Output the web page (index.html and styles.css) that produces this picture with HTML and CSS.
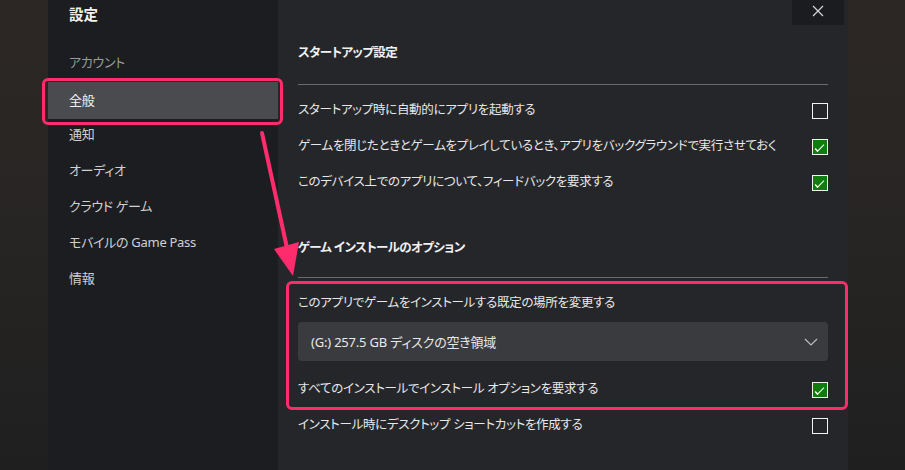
FILE: index.html
```html
<!DOCTYPE html>
<html lang="ja">
<head>
<meta charset="UTF-8">
<meta name="viewport" content="width=device-width, initial-scale=1.0">
<title>設定</title>
<link rel="stylesheet" href="styles.css">
</head>
<body>

<div class="window">
    <div class="sidebar">
        <div class="sidebar-title">設定</div>
        <ul class="menu">
            <li class="dim">アカウント</li>
            <li class="selected">全般</li>
            <li>通知</li>
            <li>オーディオ</li>
            <li>クラウド ゲーム</li>
            <li>モバイルの Game Pass</li>
            <li>情報</li>
        </ul>
    </div>

    <div class="main">
        <div class="close-row">
            <button class="close-btn" aria-label="閉じる">
                <svg width="12" height="12" viewBox="0 0 12 12"><path d="M1 1 L11 11 M11 1 L1 11" stroke="#d6d6d6" stroke-width="1.2" fill="none"/></svg>
            </button>
        </div>

        <h2 class="section-title first">スタートアップ設定</h2>
        <div class="row">
            <span>スタートアップ時に自動的にアプリを起動する</span>
            <span class="check"></span>
        </div>
        <div class="row">
            <span>ゲームを閉じたときとゲームをプレイしているとき、アプリをバックグラウンドで実行させておく</span>
            <span class="check on"></span>
        </div>
        <div class="row">
            <span>このデバイス上でのアプリについて、フィードバックを要求する</span>
            <span class="check on"></span>
        </div>

        <h2 class="section-title second">ゲーム インストールのオプション</h2>
        <div class="marked">
            <div class="label">このアプリでゲームをインストールする既定の場所を変更する</div>
            <div class="dropdown">
                <span>(G:) 257.5 GB ディスクの空き領域</span>
                <svg width="14" height="8" viewBox="0 0 14 8"><path d="M1 1 L7 7 L13 1" stroke="#bdbdbd" stroke-width="1.2" fill="none"/></svg>
            </div>
            <div class="row">
                <span>すべてのインストールでインストール オプションを要求する</span>
                <span class="check on"></span>
            </div>
        </div>
        <div class="row">
            <span>インストール時にデスクトップ ショートカットを作成する</span>
            <span class="check"></span>
        </div>
    </div>
</div>

<svg class="arrow" width="905" height="470" viewBox="0 0 905 470">
    <path d="M262 133 L287 248" stroke="#fe2c6c" stroke-width="4" stroke-linecap="round" fill="none"/>
    <polygon points="293,276 274,249 299,242" fill="#fe2c6c"/>
</svg>

</body>
</html>
```

FILE: styles.css
```css
body {
    margin: 0;
    padding: 0;
    width: 905px;
    height: 470px;
    overflow: hidden;
    position: relative;
    background: linear-gradient(180deg, #2c2725 0%, #272524 50%, #1f1f1f 100%);
    font-family: "Noto Sans", "Noto Sans CJK JP", sans-serif;
    font-feature-settings: "palt";
    color: #e8e8e8;
}
.window {
    display: flex;
    margin-left: 48px;
    width: 800px;
    height: 470px;
}
.sidebar {
    width: 230px;
    background-color: #1c1d20;
}
.sidebar-title {
    padding: 4px 0 0 21px;
    line-height: 20px;
    font-size: 14.5px;
    font-weight: bold;
    color: #f2f2f2;
}
.menu {
    list-style: none;
    margin: 20px 0 0;
    padding: 0;
}
.menu li {
    height: 36px;
    line-height: 36px;
    padding-left: 21px;
    font-size: 13px;
    letter-spacing: -0.3px;
    color: #d0d0d0;
    position: relative;
}
.menu li.dim {
    color: #9a9a9a;
}
.menu li.selected {
    height: 37px;
    margin-top: 2px;
    background-color: #4a4b4e;
    color: #f4f4f4;
}
.menu li.selected + li {
    margin-top: -3px;
}
.menu li.selected::after {
    content: "";
    position: absolute;
    left: -6px;
    right: -5px;
    top: -4px;
    bottom: -6px;
    border: 3px solid #fe2c6c;
    border-radius: 6px;
}
.main {
    width: 530px;
    padding: 0 20px;
    background-color: #25262a;
}
.close-row {
    height: 25px;
    display: flex;
    justify-content: flex-end;
    margin-right: -16px;
}
.close-btn {
    width: 52px;
    height: 25px;
    border: none;
    padding: 0 0 4px;
    background-color: #1b1c1f;
    display: flex;
    align-items: center;
    justify-content: center;
}
.section-title {
    margin: 0;
    padding-bottom: 21px;
    border-bottom: 1px solid #6b6b6b;
    line-height: 20px;
    font-size: 12.5px;
    letter-spacing: -0.6px;
    font-weight: bold;
    color: #f0f0f0;
}
.section-title.first {
    margin-top: 18px;
}
.section-title.second {
    margin-top: 37px;
    padding-bottom: 19px;
}
.row {
    height: 36px;
    display: flex;
    align-items: center;
    justify-content: space-between;
    font-size: 12.5px;
    letter-spacing: -0.3px;
    white-space: nowrap;
}
.section-title + .row {
    margin-top: 8px;
}
.row span:first-child {
    margin-top: -5px;
}
.check {
    width: 16px;
    height: 16px;
    box-sizing: border-box;
    border: 1.5px solid #f2f2f2;
    position: relative;
}
.check.on {
    background-color: #107c10;
}
.check.on::after {
    content: "";
    position: absolute;
    left: 4px;
    top: 2px;
    width: 6px;
    height: 3px;
    border-left: 1.2px solid #ffffff;
    border-bottom: 1.2px solid #ffffff;
    transform: translate(-1px, 3px) rotate(-45deg) scaleX(1.4);
}
.marked {
    position: relative;
    padding-top: 15px;
}
.marked::after {
    content: "";
    position: absolute;
    left: -12px;
    right: -20px;
    top: 3px;
    bottom: -2px;
    border: 3px solid #fe2c6c;
    border-radius: 6px;
}
.label {
    line-height: 20px;
    font-size: 12.5px;
    letter-spacing: -0.3px;
}
.dropdown {
    margin-top: 9px;
    height: 39px;
    border-radius: 4px;
    background-color: #3a3b3f;
    display: flex;
    align-items: center;
    justify-content: space-between;
    padding: 0 10px 0 13px;
    font-size: 13px;
    letter-spacing: -0.2px;
}
.marked .row {
    margin-top: 11px;
}
.arrow {
    position: absolute;
    left: 0;
    top: 0;
    pointer-events: none;
}
```
